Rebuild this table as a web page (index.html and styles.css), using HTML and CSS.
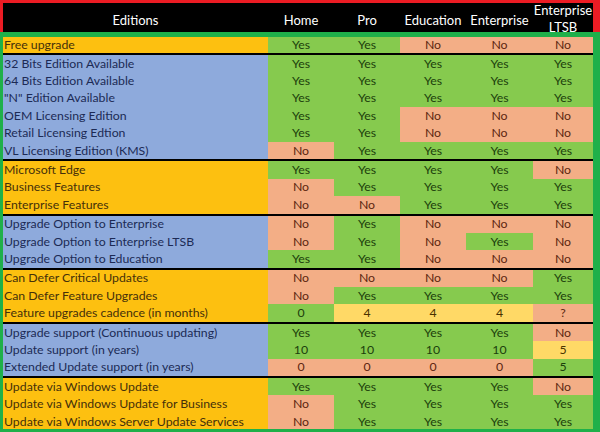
FILE: index.html
```html
<!DOCTYPE html>
<html>
<head>
<meta charset="utf-8">
<link rel="stylesheet" href="styles.css">
</head>
<body>
<div class="page">
  <div class="head">
    <div class="hc">Editions</div>
    <div class="hc">Home</div>
    <div class="hc">Pro</div>
    <div class="hc">Education</div>
    <div class="hc">Enterprise</div>
    <div class="hc wrap">Enterprise LTSB</div>
  </div>
  <div class="body">
    <div class="clip">
      <div class="group amber">
        <div class="row first"><div class="lbl">Free upgrade</div><div class="c g">Yes</div><div class="c g">Yes</div><div class="c p">No</div><div class="c p">No</div><div class="c p">No</div></div>
      </div>
      <div class="group blue">
        <div class="row"><div class="lbl">32 Bits Edition Available</div><div class="c g">Yes</div><div class="c g">Yes</div><div class="c g">Yes</div><div class="c g">Yes</div><div class="c g">Yes</div></div>
        <div class="row"><div class="lbl">64 Bits Edition Available</div><div class="c g">Yes</div><div class="c g">Yes</div><div class="c g">Yes</div><div class="c g">Yes</div><div class="c g">Yes</div></div>
        <div class="row"><div class="lbl">"N" Edition Available</div><div class="c g">Yes</div><div class="c g">Yes</div><div class="c g">Yes</div><div class="c g">Yes</div><div class="c g">Yes</div></div>
        <div class="row"><div class="lbl">OEM Licensing Edition</div><div class="c g">Yes</div><div class="c g">Yes</div><div class="c p">No</div><div class="c p">No</div><div class="c p">No</div></div>
        <div class="row"><div class="lbl">Retail Licensing Edtion</div><div class="c g">Yes</div><div class="c g">Yes</div><div class="c p">No</div><div class="c p">No</div><div class="c p">No</div></div>
        <div class="row"><div class="lbl">VL Licensing Edition (KMS)</div><div class="c p">No</div><div class="c g">Yes</div><div class="c g">Yes</div><div class="c g">Yes</div><div class="c g">Yes</div></div>
      </div>
      <div class="group amber">
        <div class="row"><div class="lbl">Microsoft Edge</div><div class="c g">Yes</div><div class="c g">Yes</div><div class="c g">Yes</div><div class="c g">Yes</div><div class="c p">No</div></div>
        <div class="row"><div class="lbl">Business Features</div><div class="c p">No</div><div class="c g">Yes</div><div class="c g">Yes</div><div class="c g">Yes</div><div class="c g">Yes</div></div>
        <div class="row"><div class="lbl">Enterprise Features</div><div class="c p">No</div><div class="c p">No</div><div class="c g">Yes</div><div class="c g">Yes</div><div class="c g">Yes</div></div>
      </div>
      <div class="group blue">
        <div class="row"><div class="lbl">Upgrade Option to Enterprise</div><div class="c p">No</div><div class="c g">Yes</div><div class="c p">No</div><div class="c p">No</div><div class="c p">No</div></div>
        <div class="row"><div class="lbl">Upgrade Option to Enterprise LTSB</div><div class="c p">No</div><div class="c g">Yes</div><div class="c p">No</div><div class="c g">Yes</div><div class="c p">No</div></div>
        <div class="row"><div class="lbl">Upgrade Option to Education</div><div class="c g">Yes</div><div class="c g">Yes</div><div class="c p">No</div><div class="c p">No</div><div class="c p">No</div></div>
      </div>
      <div class="group amber">
        <div class="row"><div class="lbl">Can Defer Critical Updates</div><div class="c p">No</div><div class="c p">No</div><div class="c p">No</div><div class="c p">No</div><div class="c g">Yes</div></div>
        <div class="row"><div class="lbl">Can Defer Feature Upgrades</div><div class="c p">No</div><div class="c g">Yes</div><div class="c g">Yes</div><div class="c g">Yes</div><div class="c g">Yes</div></div>
        <div class="row"><div class="lbl">Feature upgrades cadence (in months)</div><div class="c g">0</div><div class="c y">4</div><div class="c y">4</div><div class="c y">4</div><div class="c p">?</div></div>
      </div>
      <div class="group blue">
        <div class="row"><div class="lbl">Upgrade support (Continuous updating)</div><div class="c g">Yes</div><div class="c g">Yes</div><div class="c g">Yes</div><div class="c g">Yes</div><div class="c p">No</div></div>
        <div class="row"><div class="lbl">Update support (in years)</div><div class="c g">10</div><div class="c g">10</div><div class="c g">10</div><div class="c g">10</div><div class="c y">5</div></div>
        <div class="row"><div class="lbl">Extended Update support (in years)</div><div class="c p">0</div><div class="c p">0</div><div class="c p">0</div><div class="c p">0</div><div class="c g">5</div></div>
      </div>
      <div class="group amber">
        <div class="row"><div class="lbl">Update via Windows Update</div><div class="c g">Yes</div><div class="c g">Yes</div><div class="c g">Yes</div><div class="c g">Yes</div><div class="c p">No</div></div>
        <div class="row"><div class="lbl">Update via Windows Update for Business</div><div class="c p">No</div><div class="c g">Yes</div><div class="c g">Yes</div><div class="c g">Yes</div><div class="c g">Yes</div></div>
        <div class="row"><div class="lbl">Update via Windows Server Update Services</div><div class="c p">No</div><div class="c g">Yes</div><div class="c g">Yes</div><div class="c g">Yes</div><div class="c g">Yes</div></div>
      </div>
    </div>
  </div>
</div>
</body>
</html>
```

FILE: styles.css
```css
* { box-sizing: border-box; }
html, body { margin: 0; padding: 0; }
body {
  width: 600px;
  height: 432px;
  overflow: hidden;
  font-family: Lato, "Liberation Sans", sans-serif;
  font-size: 12.3px;
}
.page {
  width: 600px;
  height: 432px;
  background: #1fb04a;
  display: flex;
  flex-direction: column;
}
.head {
  height: 32px;
  flex: none;
  background: #000;
  border-top: 3px solid #ec1c24;
  border-left: 3px solid #ec1c24;
  border-right: 7px solid #ec1c24;
  display: grid;
  grid-template-columns: 265px 66px 66px 66px 67px 60px;
  grid-template-rows: 29px;
  color: #fff;
  font-size: 13px;
  position: relative;
  z-index: 1;
}
.hc {
  height: 29px;
  display: flex;
  align-items: center;
  justify-content: center;
  text-align: center;
  padding-top: 5px;
  line-height: 18px;
  white-space: nowrap;
}
.hc.wrap {
  white-space: normal;
  padding-top: 3px;
  line-height: 17px;
}
.body {
  flex: 1;
  padding: 5px 7px 3px 3px;
  display: flex;
  min-height: 0;
}
.clip {
  flex: 1;
  overflow: hidden;
}
.group + .group { border-top: 2px solid #000; }
.amber .lbl { background: #fdc010; color: #45300a; }
.blue .lbl { background: #8eaadc; color: #1c2a55; }
.row {
  display: grid;
  grid-template-columns: 265px 66px 66px 66px 67px 60px;
  height: 17.4px;
  line-height: 12px;
}
.row.first { height: 16px; }
.lbl {
  padding-left: 1px;
  display: flex;
  align-items: center;
  white-space: nowrap;
}
.c {
  display: flex;
  align-items: center;
  justify-content: center;
}
.g { background: #86ca4e; color: #1c3f0c; }
.p { background: #f3ae86; color: #5c2610; }
.y { background: #ffd966; color: #4a3300; }
```
